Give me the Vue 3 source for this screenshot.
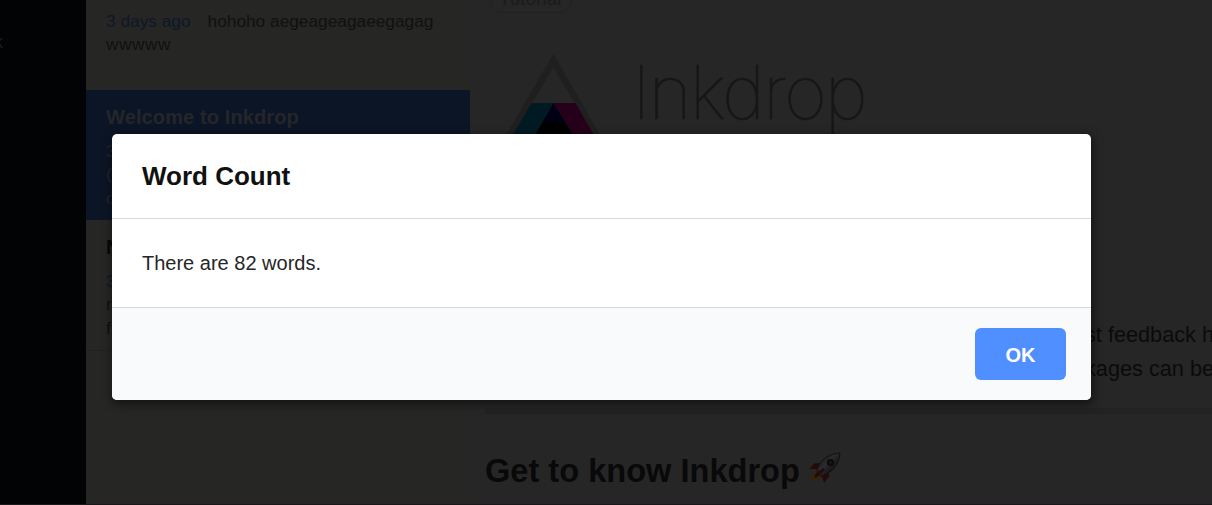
<script setup>
const notes = [
  { title: '', date: '3 days ago', lines: ['hohoho aegeageagaeegagag', 'wwwww'], state: 'first' },
  { title: 'Welcome to Inkdrop', date: '3', lines: ['', '(', 'o'], state: 'selected' },
  { title: 'N', date: '3', lines: ['', 'r', 'f'], state: '' }
]
</script>

<template>
  <div class="app">
    <aside class="sidebar"><span class="nav-label">k</span></aside>

    <section class="list">
      <article v-for="(note, i) in notes" :key="i" class="note" :class="note.state">
        <h3 v-if="note.title" class="note-title">{{ note.title }}</h3>
        <p class="line"><span class="date">{{ note.date }}</span>{{ note.lines[0] }}</p>
        <p v-for="(text, n) in note.lines.slice(1)" :key="n" class="line" :class="{ wide: note.state === 'first' }">{{ text }}</p>
      </article>
    </section>

    <main class="editor">
      <span class="tag">Tutorial</span>
      <div class="brand">
        <svg class="logo" width="110" height="90" viewBox="0 0 110 90">
          <path d="M53.3 0 L105 90 H1 Z" fill="#1f1f1f" />
          <path d="M53.3 13 L94 82 H13 Z" fill="#262626" />
          <path d="M31.5 49 H53.5 L30 90 H7.5 Z" fill="#001a24" />
          <path d="M53.5 49 H75.5 L99 90 H77 Z" fill="#26001a" />
          <path d="M53.5 49 L65 68 H42.5 Z" fill="#000014" />
          <path d="M42.5 68 H65 L78 90 H30 Z" fill="#000" />
        </svg>
        <span class="wordmark">Inkdrop</span>
      </div>
      <div class="copy">
        <p>st feedback h</p>
        <p>kages can be</p>
      </div>
      <div class="rule"></div>
      <h1 class="heading">
        <span>Get to know Inkdrop</span>
        <svg class="rocket" width="34" height="34" viewBox="0 0 34 34">
          <defs>
            <linearGradient id="hull" x1=".2" y1=".2" x2=".8" y2=".8">
              <stop offset="0" stop-color="#1d1d20" />
              <stop offset=".4" stop-color="#2b2b2e" />
              <stop offset="1" stop-color="#0a0a0c" />
            </linearGradient>
          </defs>
          <path d="M12 12 L6 12.5 L1.5 18 L9 18 Z M20 22 L21.5 25 L16 32 L14 25 Z" fill="#240a06" />
          <path d="M8 20 Q3 23 3 30 Q9 31 13.5 25 Z" fill="#33250a" />
          <path d="M9 20 C11 10 19 3 32 2 C31 14 24 22 13 25.5 Z" fill="url(#hull)" stroke="#0f0f10" stroke-width=".9" />
          <path d="M15.5 17 L17 18.5 L9.5 26 L6 26.5 L8 22 Z" fill="#260a05" />
          <circle cx="22.5" cy="11.5" r="2.9" fill="#131416" stroke="#09090a" stroke-width="1.4" />
        </svg>
      </h1>
    </main>

    <div class="overlay">
      <div class="dialog">
        <header class="dialog-head">Word Count</header>
        <div class="dialog-body">There are 82 words.</div>
        <footer class="dialog-foot"><button class="ok">OK</button></footer>
      </div>
    </div>
  </div>
</template>

<style>
body { margin: 0; background: #262626; }
</style>

<style scoped>
* { box-sizing: border-box; }
p, h1, h3 { margin: 0; }
.app {
  position: relative;
  display: grid;
  grid-template-columns: 86px 384px 1fr;
  height: 505px;
  overflow: hidden;
  font-family: "Liberation Sans", Arial, sans-serif;
  white-space: nowrap;
  border-bottom: 1px solid #1b181b;
}
.sidebar {
  background: #020305;
  padding-top: 31px;
  overflow: hidden;
}
.nav-label {
  display: block;
  margin-left: -6px;
  font-size: 18px;
  line-height: 23px;
  color: #1c1c1e;
}
.list { background: #262624; overflow: hidden; }
.note {
  height: 131px;
  padding: 15px 20px 0;
  color: #111110;
  border-bottom: 1px solid #222220;
}
.note.first { height: 90px; padding-top: 10px; border: 0; }
.note.selected { height: 130px; background: #0c1526; color: #242629; border: 0; }
.note-title {
  font-size: 20px;
  line-height: 24px;
  letter-spacing: .12px;
  margin-bottom: 11px;
}
.note:last-child { color: #10100f; }
.note:last-child .note-title { color: #080808; }
.line { font-size: 17.3px; line-height: 23.3px; height: 23.3px; }
.wide { letter-spacing: .55px; }
.date { color: #0d1829; margin-right: 17px; }
.selected .date { color: #242629; }
.editor { padding-left: 15px; overflow: hidden; background: #262626; }
.tag {
  display: block;
  width: 83px;
  height: 26px;
  margin: -13px 0 0 4px;
  border: 1px solid #222;
  border-radius: 13px;
  text-align: center;
  font-size: 18px;
  line-height: 23px;
  letter-spacing: .4px;
  color: #1b1b1b;
}
.brand { display: flex; height: 90px; margin-top: 41px; padding-left: 15px; }
.logo { flex: none; }
.wordmark {
  margin: -7px 0 0 22px;
  font-family: Inter, "Liberation Sans", sans-serif;
  font-weight: 100;
  font-size: 74px;
  line-height: 90px;
  letter-spacing: -2px;
  color: #171717;
  -webkit-text-stroke: .7px #171717;
}
.copy {
  margin: 174px 0 0 600px;
  font-size: 21.7px;
  line-height: 34px;
  color: #0b0b0b;
}
.rule { height: 6px; margin-top: 22px; background: #222; }
.heading {
  display: flex;
  margin-top: 37px;
  font-size: 32.6px;
  line-height: 40px;
  color: #090909;
}
.rocket { margin: 0 0 0 8px; }
.overlay {
  position: absolute;
  inset: 0;
  padding: 134px 121px 0 112px;
}
.dialog {
  height: 266px;
  display: flex;
  flex-direction: column;
  border-radius: 5px;
  background: #fff;
  box-shadow: 1px 3px 10px 1px rgba(0, 0, 0, .5);
  overflow: hidden;
}
.dialog-head {
  height: 85px;
  padding: 0 30px;
  border-bottom: 1px solid #d8d9da;
  font-size: 26px;
  font-weight: bold;
  line-height: 84px;
  color: #111;
}
.dialog-body {
  height: 88px;
  padding: 0 30px;
  font-size: 20px;
  line-height: 89px;
  color: #262626;
}
.dialog-foot {
  flex: 1;
  display: flex;
  justify-content: flex-end;
  padding: 20px 25px 0;
  border-top: 1px solid #d6d8da;
  background: #f9fafc;
}
.ok {
  width: 91px;
  height: 52px;
  padding: 2px 0 0;
  border: 0;
  border-radius: 6px;
  background: #4f8fff;
  color: #fff;
  font: bold 20px "Liberation Sans", Arial, sans-serif;
}
</style>
